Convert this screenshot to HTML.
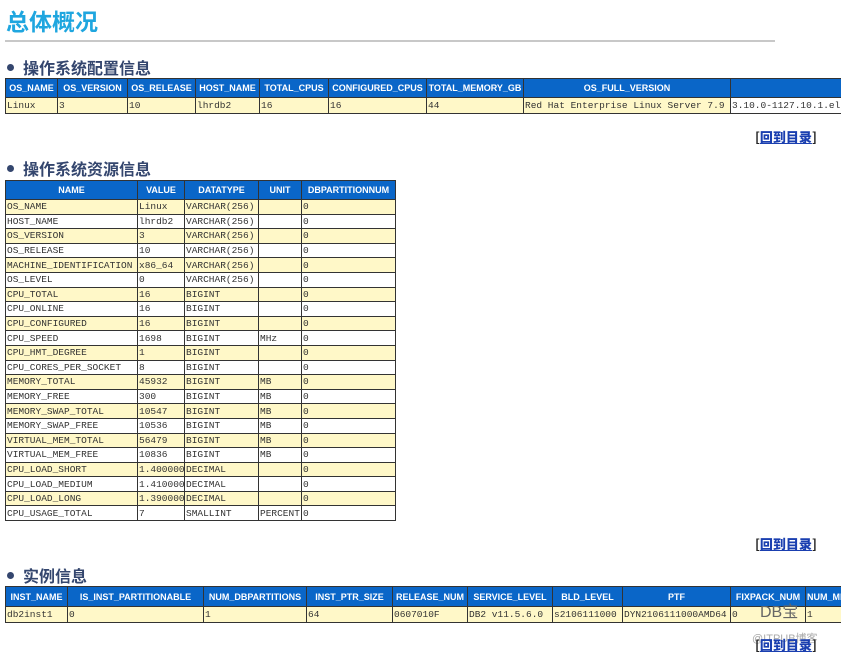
<!DOCTYPE html>
<html><head><meta charset="utf-8"><style>
body{margin:0;width:841px;height:653px;overflow:hidden;background:#fff;position:relative;font-family:"Liberation Sans","Noto Sans CJK SC",sans-serif}
.a{position:absolute}
h1{position:absolute;left:6px;top:3px;margin:0;font-size:23px;color:#1fa6df;font-weight:bold;font-family:"Noto Sans CJK SC",sans-serif}
.hr{position:absolute;left:5px;top:40px;width:770px;height:2px;background:#c8c8c8}
.h2{position:absolute;left:7px;margin:0;font-size:16px;font-weight:bold;color:#34466e;font-family:"Noto Sans CJK SC",sans-serif;line-height:20px}
.h2 span{display:inline-block;width:7px;height:7px;border-radius:50%;background:#34466e;margin-right:9px;vertical-align:3px}
table{position:absolute;border-collapse:collapse;table-layout:fixed}
td,th{border:1px solid #333;padding:0 1px;white-space:nowrap;overflow:hidden;font-size:9.5px}
th{background:#0a66c8;color:#fff;font-family:"Liberation Sans",sans-serif;font-size:9px;font-weight:bold}
td{font-family:"Liberation Mono",monospace;color:#333;text-align:left;font-size:9.5px}
tr.y td{background:#fff8c8}
.lk{position:absolute;left:755px;font-size:13px;font-weight:bold;color:#222;font-family:"Noto Sans CJK SC",sans-serif}
.lk b{color:#1a3fb0;text-decoration:underline}
</style></head><body>
<h1>总体概况</h1>
<div class="hr"></div>
<div class="h2" style="top:57px"><span></span>操作系统配置信息</div>
<table style="left:5px;top:78px;width:850px">
<colgroup><col style="width:52px"><col style="width:70px"><col style="width:68px"><col style="width:64px"><col style="width:69px"><col style="width:98px"><col style="width:97px"><col style="width:207px"><col style="width:125px"></colgroup>
<tr style="height:19px"><th>OS_NAME</th><th>OS_VERSION</th><th>OS_RELEASE</th><th>HOST_NAME</th><th>TOTAL_CPUS</th><th>CONFIGURED_CPUS</th><th>TOTAL_MEMORY_GB</th><th>OS_FULL_VERSION</th><th></th></tr>
<tr class="y" style="height:16px"><td>Linux</td><td>3</td><td>10</td><td>lhrdb2</td><td>16</td><td>16</td><td>44</td><td>Red Hat Enterprise Linux Server 7.9</td><td style="background:#fff">3.10.0-1127.10.1.el7</td></tr>
</table>
<div class="lk" style="top:127px">[<b>回到目录</b>]</div>
<div class="h2" style="top:158px"><span></span>操作系统资源信息</div>
<table style="left:5px;top:180px;width:390px">
<colgroup><col style="width:132px"><col style="width:47px"><col style="width:74px"><col style="width:43px"><col style="width:94px"></colgroup>
<tr style="height:19px"><th>NAME</th><th>VALUE</th><th>DATATYPE</th><th>UNIT</th><th>DBPARTITIONNUM</th></tr>
<tr class="y" style="height:14.6px"><td>OS_NAME</td><td>Linux</td><td>VARCHAR(256)</td><td></td><td>0</td></tr>
<tr style="height:14.6px"><td>HOST_NAME</td><td>lhrdb2</td><td>VARCHAR(256)</td><td></td><td>0</td></tr>
<tr class="y" style="height:14.6px"><td>OS_VERSION</td><td>3</td><td>VARCHAR(256)</td><td></td><td>0</td></tr>
<tr style="height:14.6px"><td>OS_RELEASE</td><td>10</td><td>VARCHAR(256)</td><td></td><td>0</td></tr>
<tr class="y" style="height:14.6px"><td>MACHINE_IDENTIFICATION</td><td>x86_64</td><td>VARCHAR(256)</td><td></td><td>0</td></tr>
<tr style="height:14.6px"><td>OS_LEVEL</td><td>0</td><td>VARCHAR(256)</td><td></td><td>0</td></tr>
<tr class="y" style="height:14.6px"><td>CPU_TOTAL</td><td>16</td><td>BIGINT</td><td></td><td>0</td></tr>
<tr style="height:14.6px"><td>CPU_ONLINE</td><td>16</td><td>BIGINT</td><td></td><td>0</td></tr>
<tr class="y" style="height:14.6px"><td>CPU_CONFIGURED</td><td>16</td><td>BIGINT</td><td></td><td>0</td></tr>
<tr style="height:14.6px"><td>CPU_SPEED</td><td>1698</td><td>BIGINT</td><td>MHz</td><td>0</td></tr>
<tr class="y" style="height:14.6px"><td>CPU_HMT_DEGREE</td><td>1</td><td>BIGINT</td><td></td><td>0</td></tr>
<tr style="height:14.6px"><td>CPU_CORES_PER_SOCKET</td><td>8</td><td>BIGINT</td><td></td><td>0</td></tr>
<tr class="y" style="height:14.6px"><td>MEMORY_TOTAL</td><td>45932</td><td>BIGINT</td><td>MB</td><td>0</td></tr>
<tr style="height:14.6px"><td>MEMORY_FREE</td><td>300</td><td>BIGINT</td><td>MB</td><td>0</td></tr>
<tr class="y" style="height:14.6px"><td>MEMORY_SWAP_TOTAL</td><td>10547</td><td>BIGINT</td><td>MB</td><td>0</td></tr>
<tr style="height:14.6px"><td>MEMORY_SWAP_FREE</td><td>10536</td><td>BIGINT</td><td>MB</td><td>0</td></tr>
<tr class="y" style="height:14.6px"><td>VIRTUAL_MEM_TOTAL</td><td>56479</td><td>BIGINT</td><td>MB</td><td>0</td></tr>
<tr style="height:14.6px"><td>VIRTUAL_MEM_FREE</td><td>10836</td><td>BIGINT</td><td>MB</td><td>0</td></tr>
<tr class="y" style="height:14.6px"><td>CPU_LOAD_SHORT</td><td>1.400000</td><td>DECIMAL</td><td></td><td>0</td></tr>
<tr style="height:14.6px"><td>CPU_LOAD_MEDIUM</td><td>1.410000</td><td>DECIMAL</td><td></td><td>0</td></tr>
<tr class="y" style="height:14.6px"><td>CPU_LOAD_LONG</td><td>1.390000</td><td>DECIMAL</td><td></td><td>0</td></tr>
<tr style="height:14.6px"><td>CPU_USAGE_TOTAL</td><td>7</td><td>SMALLINT</td><td>PERCENT</td><td>0</td></tr>
</table>
<div class="lk" style="top:534px">[<b>回到目录</b>]</div>
<div class="h2" style="top:565px"><span></span>实例信息</div>
<table style="left:5px;top:586px;width:860px">
<colgroup><col style="width:62px"><col style="width:136px"><col style="width:103px"><col style="width:86px"><col style="width:75px"><col style="width:85px"><col style="width:70px"><col style="width:108px"><col style="width:75px"><col style="width:60px"></colgroup>
<tr style="height:20px"><th>INST_NAME</th><th>IS_INST_PARTITIONABLE</th><th>NUM_DBPARTITIONS</th><th>INST_PTR_SIZE</th><th>RELEASE_NUM</th><th>SERVICE_LEVEL</th><th>BLD_LEVEL</th><th>PTF</th><th>FIXPACK_NUM</th><th>NUM_MEMBERS</th></tr>
<tr class="y" style="height:16px"><td>db2inst1</td><td>0</td><td>1</td><td>64</td><td>0607010F</td><td>DB2 v11.5.6.0</td><td>s2106111000</td><td>DYN2106111000AMD64</td><td>0</td><td>1</td></tr>
</table>
<div class="a" style="left:760px;top:598px;font-size:16px;color:#666">DB宝</div>
<div class="a" style="left:752px;top:630px;font-size:11px;color:#aaa">@ITPUB博客</div>
<div class="lk" style="top:635px">[<b>回到目录</b>]</div>
</body></html>
